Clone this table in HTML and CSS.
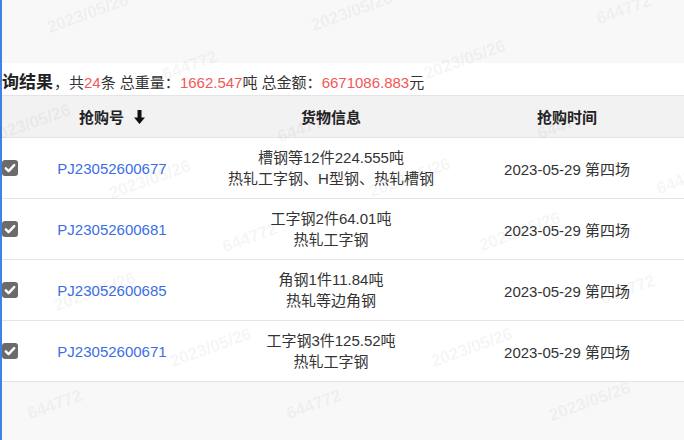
FILE: index.html
```html
<!DOCTYPE html>
<html lang="zh-CN">
<head>
  <meta charset="UTF-8">
  <meta name="viewport" content="width=device-width, initial-scale=1.0">
  <title>查询结果</title>
  <link rel="stylesheet" href="styles.css">
</head>
<body>
  <div class="page">
    <div class="top-space"></div>

    <div class="summary">
      <span class="summary-title">询结果</span>，共<span class="num">24</span>条 总重量：<span class="num">1662.547</span>吨 总金额：<span class="num">6671086.883</span>元
    </div>

    <div class="table">
      <div class="row head">
        <div class="cell check"></div>
        <div class="cell">抢购号
          <svg class="sort" width="11" height="14" viewBox="0 0 11 14"><path d="M3.5 0h4v7.5h3.5L5.5 14 0 7.5h3.5z" fill="#111"/></svg>
        </div>
        <div class="cell">货物信息</div>
        <div class="cell">抢购时间</div>
        <div class="cell"></div>
      </div>

      <div class="row">
        <div class="cell check"><span class="box"><svg width="16" height="16" viewBox="0 0 16 16"><path d="M3.8 8.3l2.8 2.8 5.6-6" fill="none" stroke="#fff" stroke-width="2.4" stroke-linecap="round" stroke-linejoin="round"/></svg></span></div>
        <div class="cell"><a class="code" href="#">PJ23052600677</a></div>
        <div class="cell goods"><div>槽钢等12件224.555吨</div><div>热轧工字钢、H型钢、热轧槽钢</div></div>
        <div class="cell">2023-05-29 第四场</div>
        <div class="cell"></div>
      </div>

      <div class="row">
        <div class="cell check"><span class="box"><svg width="16" height="16" viewBox="0 0 16 16"><path d="M3.8 8.3l2.8 2.8 5.6-6" fill="none" stroke="#fff" stroke-width="2.4" stroke-linecap="round" stroke-linejoin="round"/></svg></span></div>
        <div class="cell"><a class="code" href="#">PJ23052600681</a></div>
        <div class="cell goods"><div>工字钢2件64.01吨</div><div>热轧工字钢</div></div>
        <div class="cell">2023-05-29 第四场</div>
        <div class="cell"></div>
      </div>

      <div class="row">
        <div class="cell check"><span class="box"><svg width="16" height="16" viewBox="0 0 16 16"><path d="M3.8 8.3l2.8 2.8 5.6-6" fill="none" stroke="#fff" stroke-width="2.4" stroke-linecap="round" stroke-linejoin="round"/></svg></span></div>
        <div class="cell"><a class="code" href="#">PJ23052600685</a></div>
        <div class="cell goods"><div>角钢1件11.84吨</div><div>热轧等边角钢</div></div>
        <div class="cell">2023-05-29 第四场</div>
        <div class="cell"></div>
      </div>

      <div class="row">
        <div class="cell check"><span class="box"><svg width="16" height="16" viewBox="0 0 16 16"><path d="M3.8 8.3l2.8 2.8 5.6-6" fill="none" stroke="#fff" stroke-width="2.4" stroke-linecap="round" stroke-linejoin="round"/></svg></span></div>
        <div class="cell"><a class="code" href="#">PJ23052600671</a></div>
        <div class="cell goods"><div>工字钢3件125.52吨</div><div>热轧工字钢</div></div>
        <div class="cell">2023-05-29 第四场</div>
        <div class="cell"></div>
      </div>
    </div>
  </div>

  <!-- 水印 -->
  <div class="watermarks">
    <span class="wm" style="left:88px;top:14px">2023/05/26</span>
    <span class="wm" style="left:352px;top:12px">2023/05/26</span>
    <span class="wm" style="left:624px;top:10px">644772</span>
    <span class="wm" style="left:190px;top:66px">644772</span>
    <span class="wm" style="left:465px;top:60px">2023/05/26</span>
    <span class="wm" style="left:30px;top:124px">2023/05/26</span>
    <span class="wm" style="left:305px;top:128px">644772</span>
    <span class="wm" style="left:565px;top:125px">644772</span>
    <span class="wm" style="left:150px;top:180px">2023/05/26</span>
    <span class="wm" style="left:410px;top:178px">2023/05/26</span>
    <span class="wm" style="left:684px;top:180px">644772</span>
    <span class="wm" style="left:250px;top:238px">644772</span>
    <span class="wm" style="left:520px;top:232px">2023/05/26</span>
    <span class="wm" style="left:95px;top:292px">2023/05/26</span>
    <span class="wm" style="left:628px;top:290px">644772</span>
    <span class="wm" style="left:211px;top:348px">2023/05/26</span>
    <span class="wm" style="left:472px;top:348px">2023/05/26</span>
    <span class="wm" style="left:55px;top:405px">644772</span>
    <span class="wm" style="left:314px;top:405px">644772</span>
    <span class="wm" style="left:590px;top:402px">2023/05/26</span>
  </div>
</body>
</html>
```

FILE: styles.css
```css
html, body {
  margin: 0;
  height: 100%;
}

body {
  font-family: "Liberation Sans", "Noto Sans CJK SC", sans-serif;
  font-size: 15px;
  color: #333;
  background-color: #f8f8f8;
  overflow: hidden;
}

.page {
  border-left: 2px solid #3f82e4;
  min-height: 440px;
  box-sizing: border-box;
}

.top-space {
  height: 63px;
}

.summary {
  height: 32px;
  box-sizing: border-box;
  padding-top: 10px;
  line-height: 20px;
  background-color: #fff;
  white-space: nowrap;
}

.summary-title {
  font-size: 17px;
  font-weight: bold;
  color: #222;
  margin-right: 1px;
}

.num {
  color: #f25858;
}

.table {
  background-color: #fff;
  border-top: 1px solid #e4e4e4;
}

.row {
  display: grid;
  grid-template-columns: 34px 152px 286px 186px 1fr;
  height: 61px;
  box-sizing: border-box;
  border-bottom: 1px solid #e4e4e4;
}

.row.head {
  height: 42px;
  background-color: #f2f2f2;
  font-weight: bold;
  color: #222;
}

.cell {
  display: flex;
  flex-direction: column;
  justify-content: center;
  align-items: center;
  text-align: center;
  white-space: nowrap;
}

.head .cell {
  flex-direction: row;
}

.cell.check {
  align-items: flex-start;
}

.sort {
  margin-left: 10px;
  margin-top: 1px;
}

.box {
  display: block;
  width: 16px;
  height: 16px;
  border-radius: 3px;
  background-color: #6b6b6b;
}

.box svg {
  display: block;
}

.code {
  color: #3b6ee6;
  text-decoration: none;
}

.goods {
  line-height: 21px;
}

.watermarks {
  position: fixed;
  inset: 0;
  pointer-events: none;
  overflow: hidden;
}

.wm {
  position: absolute;
  transform: translate(-50%, -50%) rotate(-20deg);
  font-family: "Liberation Sans", sans-serif;
  font-size: 17px;
  font-weight: bold;
  color: rgba(0, 0, 0, 0.038);
  white-space: nowrap;
}
```
